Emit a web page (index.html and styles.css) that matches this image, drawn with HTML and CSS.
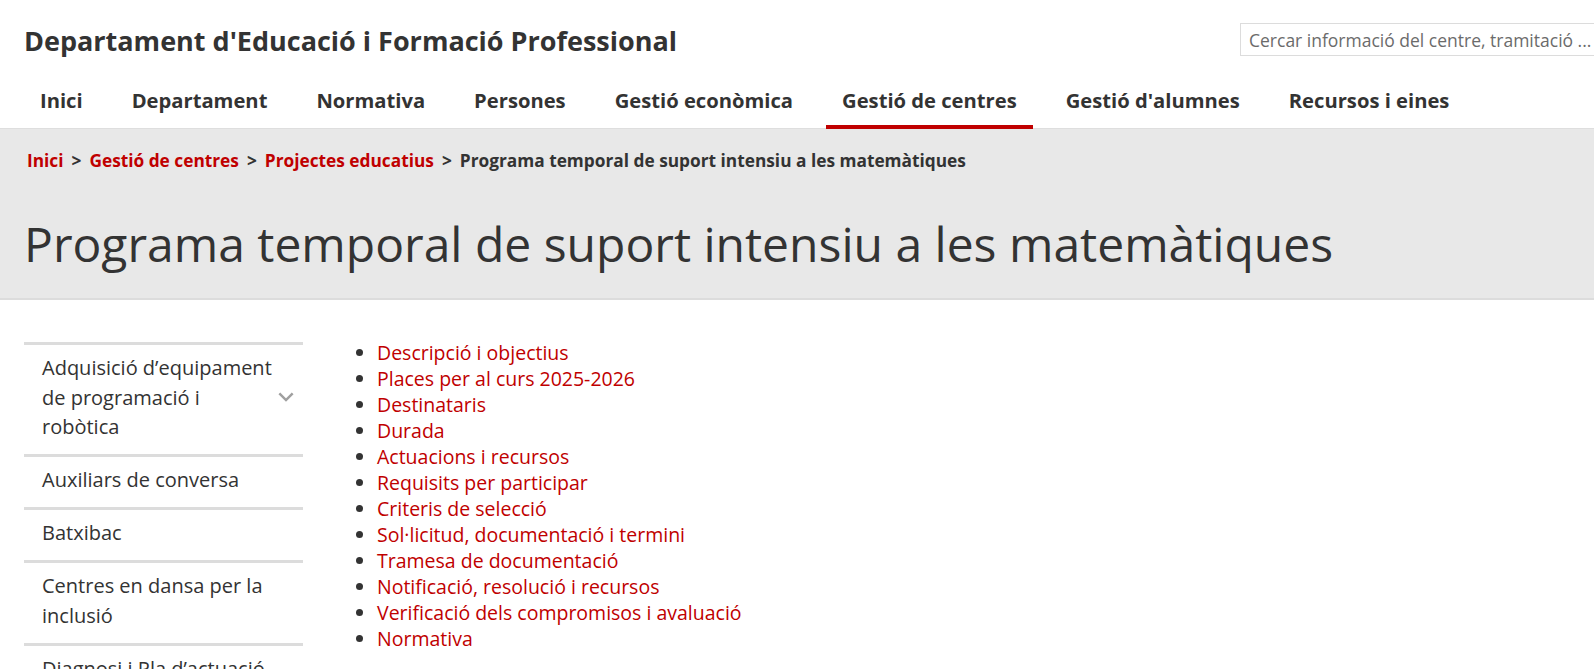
FILE: index.html
```html
<!DOCTYPE html>
<html lang="ca">
<head>
<meta charset="utf-8">
<title>Programa temporal de suport intensiu a les matemàtiques</title>
<link rel="stylesheet" href="styles.css">
</head>
<body>
<header class="site-header">
  <div class="top-row">
    <div class="site-title">Departament d'Educació i Formació Professional</div>
    <input class="search" type="text" placeholder="Cercar informació del centre, tramitació ...">
  </div>
  <nav class="main-nav">
    <a class="nav-item" href="#">Inici</a>
    <a class="nav-item" href="#">Departament</a>
    <a class="nav-item" href="#">Normativa</a>
    <a class="nav-item" href="#">Persones</a>
    <a class="nav-item" href="#">Gestió econòmica</a>
    <a class="nav-item active" href="#">Gestió de centres</a>
    <a class="nav-item" href="#">Gestió d'alumnes</a>
    <a class="nav-item" href="#">Recursos i eines</a>
  </nav>
</header>
<section class="band">
  <div class="breadcrumb"><a href="#">Inici</a><span class="sep">&gt;</span><a href="#">Gestió de centres</a><span class="sep">&gt;</span><a href="#">Projectes educatius</a><span class="sep">&gt;</span><span class="current">Programa temporal de suport intensiu a les matemàtiques</span></div>
  <h1 class="page-title">Programa temporal de suport intensiu a les matemàtiques</h1>
</section>
<main class="content">
  <aside class="sidebar">
    <a class="side-item has-sub" href="#"><span class="side-text narrow">Adquisició d’equipament de programació i robòtica</span><svg class="chev" width="18" height="12" viewBox="0 0 18 12"><polyline points="1.5,2 9,9.5 16.5,2" fill="none" stroke="#a0a0a0" stroke-width="2.8"/></svg></a>
    <a class="side-item" href="#"><span class="side-text">Auxiliars de conversa</span></a>
    <a class="side-item" href="#"><span class="side-text">Batxibac</span></a>
    <a class="side-item" href="#"><span class="side-text">Centres en dansa per la inclusió</span></a>
    <a class="side-item" href="#"><span class="side-text">Diagnosi i Pla d’actuació</span></a>
  </aside>
  <ul class="toc">
    <li><a href="#">Descripció i objectius</a></li>
    <li><a href="#">Places per al curs 2025-2026</a></li>
    <li><a href="#">Destinataris</a></li>
    <li><a href="#">Durada</a></li>
    <li><a href="#">Actuacions i recursos</a></li>
    <li><a href="#">Requisits per participar</a></li>
    <li><a href="#">Criteris de selecció</a></li>
    <li><a href="#">Sol·licitud, documentació i termini</a></li>
    <li><a href="#">Tramesa de documentació</a></li>
    <li><a href="#">Notificació, resolució i recursos</a></li>
    <li><a href="#">Verificació dels compromisos i avaluació</a></li>
    <li><a href="#">Normativa</a></li>
  </ul>
</main>
</body>
</html>
```

FILE: styles.css
```css
html {
  overflow: hidden;
}
body {
  margin: 0;
  font-family: "Open Sans", "Noto Sans", sans-serif;
  font-feature-settings: "locl" 0;
  color: #333;
  background: #fff;
}
a {
  text-decoration: none;
}

.site-header {
  padding: 0 24px;
}
.top-row {
  display: flex;
  align-items: flex-start;
  padding-top: 23px;
}
.site-title {
  flex: 1;
  font-size: 27px;
  font-weight: 700;
  line-height: 36px;
  color: #333;
}
.search {
  flex-shrink: 0;
  width: 380px;
  height: 33px;
  box-sizing: border-box;
  margin-right: -50px;
  border: 1px solid #dcdcdc;
  padding: 0 8px;
  font-family: "Open Sans", sans-serif;
  font-size: 17.5px;
  color: #333;
  outline: none;
}
.search::placeholder {
  color: #6b6b6b;
  opacity: 1;
}

.main-nav {
  display: flex;
  gap: 17px;
  margin-top: 15px;
  margin-bottom: -1px;
  position: relative;
  z-index: 1;
}
.nav-item {
  display: block;
  padding: 12px 16px 11px;
  line-height: 28px;
  font-size: 20.2px;
  font-weight: 700;
  color: #333;
  border-bottom: 4px solid transparent;
}
.nav-item.active {
  border-bottom-color: #c00000;
}

.band {
  background: #e8e8e8;
  border-top: 1px solid #dedede;
  border-bottom: 2px solid #dcdcdc;
  padding: 20px 24px 25px;
}
.breadcrumb {
  font-size: 17.3px;
  font-weight: 700;
  line-height: 24px;
  color: #333;
  padding-left: 3px;
}
.breadcrumb a {
  color: #c00000;
}
.breadcrumb .sep {
  margin: 0 8px;
}
.page-title {
  margin: 42px 0 0;
  font-size: 48px;
  font-weight: 400;
  line-height: 58px;
  color: #333;
}

.content {
  display: grid;
  grid-template-columns: 279px 1fr;
  gap: 34px;
  padding: 40px 24px 0;
}
.sidebar {
  display: flex;
  flex-direction: column;
  margin-top: 2px;
}
.side-item {
  display: flex;
  align-items: center;
  border-top: 3px solid #dcdcdc;
  padding: 8px 9px 12.5px 18px;
  font-size: 20px;
  font-weight: 500;
  line-height: 29.5px;
  color: #333;
}
.side-text {
  flex: 1;
}
.side-text.narrow {
  flex: 0 0 236px;
}
.chev {
  margin-left: auto;
  margin-top: -1px;
}

.toc {
  margin: 0;
  padding-left: 40px;
  font-size: 19.5px;
  line-height: 26px;
}
.toc li::marker {
  color: #333;
}
.toc a {
  color: #c00000;
}
```
